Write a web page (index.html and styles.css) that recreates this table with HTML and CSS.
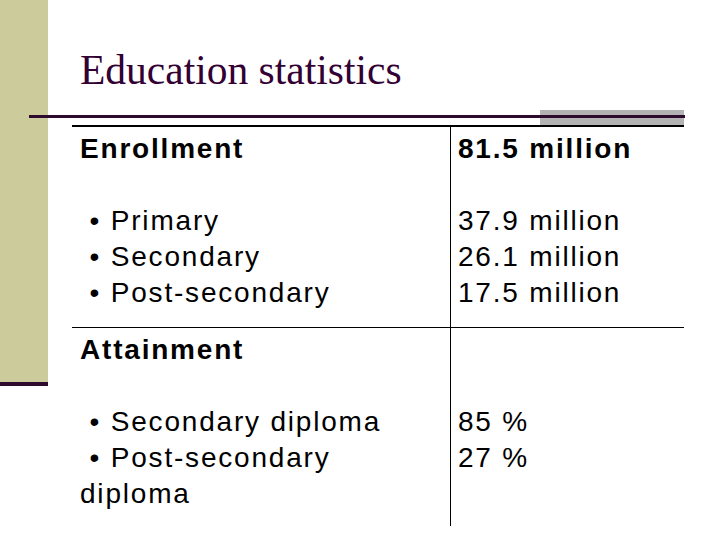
FILE: index.html
```html
<!DOCTYPE html>
<html lang="en">
<head>
<meta charset="utf-8">
<title>Education statistics</title>
<link rel="stylesheet" href="styles.css">
</head>
<body>
<div class="slide">
  <div class="sidebar"></div>
  <div class="main">
    <h1 class="title">Education statistics</h1>
    <div class="rule-row"><div class="gray-block"></div></div>
    <div class="stats">
      <div class="cell cell-left row-1">
        <div class="line bold">Enrollment</div>
        <div class="line">&nbsp;</div>
        <div class="line">&nbsp;• Primary</div>
        <div class="line">&nbsp;• Secondary</div>
        <div class="line">&nbsp;• Post-secondary</div>
      </div>
      <div class="cell cell-right row-1">
        <div class="line bold">81.5 million</div>
        <div class="line">&nbsp;</div>
        <div class="line">37.9 million</div>
        <div class="line">26.1 million</div>
        <div class="line">17.5 million</div>
      </div>
      <div class="cell cell-left row-2">
        <div class="line bold">Attainment</div>
        <div class="line">&nbsp;</div>
        <div class="line">&nbsp;• Secondary diploma</div>
        <div class="line">&nbsp;• Post-secondary diploma</div>
      </div>
      <div class="cell cell-right row-2">
        <div class="line">&nbsp;</div>
        <div class="line">&nbsp;</div>
        <div class="line">85 %</div>
        <div class="line">27 %</div>
      </div>
    </div>
  </div>
</div>
</body>
</html>
```
FILE: styles.css
```css
html, body {
  margin: 0;
  padding: 0;
  background: #ffffff;
}

.slide {
  display: flex;
  width: 720px;
  height: 540px;
  overflow: hidden;
  background: #ffffff;
}

.sidebar {
  flex: none;
  width: 48px;
  height: 382px;
  background: #cbcb9c;
  border-bottom: 4px solid #2e0a2e;
}

.main {
  flex: 1;
  min-width: 0;
}

.title {
  margin: 46px 0 0 32px;
  font-family: "Liberation Serif", "Times New Roman", serif;
  font-weight: normal;
  font-size: 41.5px;
  line-height: 48px;
  color: #330033;
}

.rule-row {
  position: relative;
  display: flex;
  justify-content: flex-end;
  margin: 16px 0 0 -19px;
  width: 656px;
  height: 15px;
}

.rule-row::before {
  content: "";
  position: absolute;
  left: 0;
  right: 0;
  top: 5px;
  height: 3px;
  background: #2e0a2e;
  z-index: 1;
}

.gray-block {
  width: 144px;
  margin-right: 1px;
  background: #b3b3b3;
}

.stats {
  display: grid;
  grid-template-columns: 379px 233px;
  grid-template-rows: 201px 198px;
  margin-left: 24px;
  width: 612px;
  border-top: 2px solid #000000;
  font-family: "Liberation Sans", Arial, sans-serif;
  font-size: 28px;
  line-height: 36px;
  letter-spacing: 1.8px;
  color: #000000;
}

.cell {
  box-sizing: border-box;
  padding-top: 4px;
}

.cell-left {
  padding-left: 8px;
  border-right: 1px solid #000000;
}

.cell-right {
  padding-left: 7px;
}

.row-1 {
  border-bottom: 1px solid #000000;
}

.bold {
  font-weight: bold;
}
```
